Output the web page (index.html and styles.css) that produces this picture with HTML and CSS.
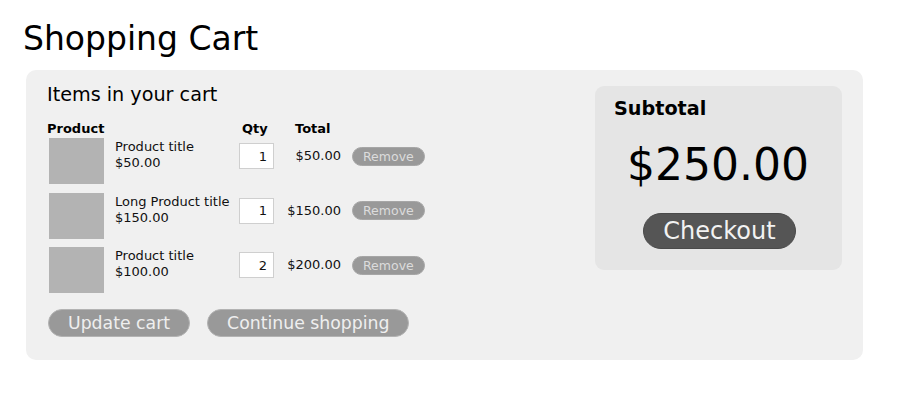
FILE: index.html
```html
<!DOCTYPE html>
<html lang="en">
<head>
<meta charset="utf-8">
<title>Shopping Cart</title>
<link rel="stylesheet" href="styles.css">
</head>
<body>
<div class="page">
  <h1 class="page-title">Shopping Cart</h1>
  <div class="panel">
    <div class="items">
      <h2 class="items-title">Items in your cart</h2>
      <div class="cart-grid">
        <div class="hd hd-product">Product</div>
        <div class="hd"></div>
        <div class="hd hd-qty">Qty</div>
        <div class="hd hd-total">Total</div>
        <div class="hd"></div>

        <div class="thumb"></div>
        <div class="info">Product title<br>$50.00</div>
        <input class="qty" type="text" value="1">
        <div class="total">$50.00</div>
        <div class="act"><button class="btn-remove">Remove</button></div>

        <div class="thumb"></div>
        <div class="info">Long Product title<br>$150.00</div>
        <input class="qty" type="text" value="1">
        <div class="total">$150.00</div>
        <div class="act"><button class="btn-remove">Remove</button></div>

        <div class="thumb"></div>
        <div class="info">Product title<br>$100.00</div>
        <input class="qty" type="text" value="2">
        <div class="total">$200.00</div>
        <div class="act"><button class="btn-remove">Remove</button></div>
      </div>
      <div class="actions">
        <button class="btn-pill">Update cart</button>
        <button class="btn-pill">Continue shopping</button>
      </div>
    </div>
    <div class="summary">
      <h3 class="summary-title">Subtotal</h3>
      <div class="summary-amount">$250.00</div>
      <button class="btn-checkout">Checkout</button>
    </div>
  </div>
</div>
</body>
</html>
```
FILE: styles.css
```css
* { box-sizing: border-box; }
html, body { margin: 0; background: #fff; }
body {
  font-family: "DejaVu Sans", Verdana, sans-serif;
  color: #111;
}
.page {
  padding: 20px 45px 0 23px;
}
.page-title {
  margin: 0 0 13px 0;
  font-size: 33px;
  font-weight: normal;
  line-height: 37px;
  color: #000;
}
.panel {
  margin-left: 3px;
  background: #f0f0f0;
  border-radius: 10px;
  padding: 14px 21px 23px 21px;
  display: flex;
  align-items: flex-start;
  justify-content: space-between;
}
.items { display: flex; flex-direction: column; }
.items-title {
  margin: 0 0 15px 0;
  font-size: 19.2px;
  font-weight: normal;
  line-height: 22px;
  color: #000;
}
.cart-grid {
  display: grid;
  grid-template-columns: 68px 124px 35px 67px auto;
  row-gap: 8.5px;
  align-items: start;
}
.hd {
  font-size: 13px;
  font-weight: bold;
  line-height: 15px;
  color: #000;
  margin-bottom: -6.5px;
}
.hd-qty { padding-left: 3px; }
.hd-total { padding-left: 21px; }
.thumb {
  margin-left: 2px;
  width: 55px;
  height: 46px;
  background: #b3b3b3;
}
.info {
  margin-top: 1px;
  font-size: 13px;
  line-height: 16px;
  color: #111;
  white-space: nowrap;
}
.qty {
  margin-top: 5px;
  width: 35px;
  height: 26px;
  border: 1px solid #cfcfcf;
  background: #fff;
  font-family: "DejaVu Sans", sans-serif;
  font-size: 13px;
  text-align: right;
  padding: 0 6px 0 2px;
  color: #111;
}
.total {
  margin-top: 5px;
  height: 26px;
  line-height: 26px;
  font-size: 13px;
  text-align: right;
  color: #111;
}
.act {
  margin-top: 5px;
  height: 26px;
  display: flex;
  align-items: center;
  padding-left: 11px;
}
.btn-remove {
  font-family: "DejaVu Sans", sans-serif;
  font-size: 12.5px;
  height: 19px;
  line-height: 17px;
  padding: 0 10px;
  border: 1px solid #a6a6a6;
  border-radius: 10px;
  background: #999;
  color: #dcdcdc;
}
.actions {
  margin-top: 16px;
  display: flex;
  gap: 17px;
  padding-left: 1px;
}
.btn-pill {
  font-family: "DejaVu Sans", sans-serif;
  font-size: 17.3px;
  height: 28px;
  line-height: 26px;
  padding: 0 19px;
  border: 1px solid #b3b3b3;
  border-radius: 14px;
  background: #999;
  color: #efefef;
}
.summary {
  margin-top: 2px;
  width: 247px;
  height: 184px;
  background: #e5e5e5;
  border-radius: 9px;
  padding: 12px 20px 0 19px;
  display: flex;
  flex-direction: column;
}
.summary-title {
  margin: 0;
  font-size: 19.2px;
  font-weight: bold;
  line-height: 22px;
  color: #000;
}
.summary-amount {
  margin-top: 19px;
  text-align: center;
  font-size: 44px;
  line-height: 51px;
  color: #000;
}
.btn-checkout {
  align-self: center;
  margin-top: 23px;
  margin-left: 3px;
  height: 36px;
  padding: 0 19px;
  font-family: "DejaVu Sans", sans-serif;
  font-size: 24px;
  line-height: 34px;
  border: 1px solid #4a4a4a;
  border-radius: 18px;
  background: #555;
  color: #f2f2f2;
}
```
